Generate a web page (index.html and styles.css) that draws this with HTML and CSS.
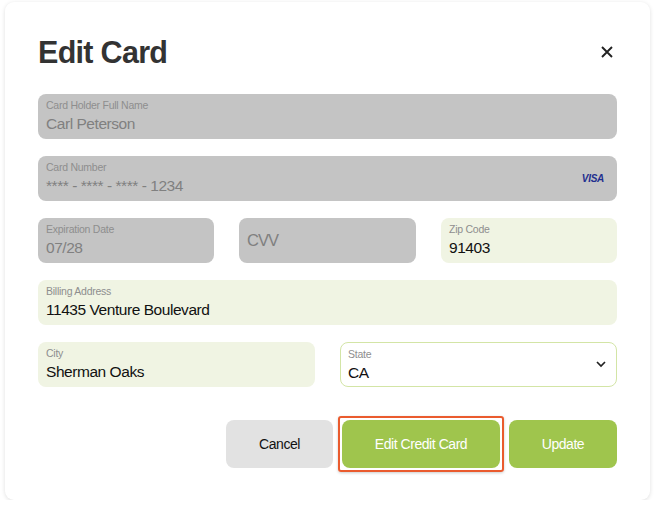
FILE: index.html
```html
<!DOCTYPE html>
<html>

<head>
  <title>Edit Card</title>
  <link rel="stylesheet" href="styles.css">
</head>

<body>
  <div class="card">
    <div class="card-header">
      <h1 class="title">Edit Card</h1>
      <svg class="close" viewBox="0 0 12 12" width="12" height="12">
        <path d="M1 1 L11 11 M11 1 L1 11" stroke="#222" stroke-width="1.9" fill="none" />
      </svg>
    </div>

    <div class="form">
      <div class="field disabled">
        <span class="label">Card Holder Full Name</span>
        <span class="value">Carl Peterson</span>
      </div>
      <div class="field disabled with-icon">
        <div class="field-text">
          <span class="label">Card Number</span>
          <span class="value">**** - **** - **** - 1234</span>
        </div>
        <span class="visa">VISA</span>
      </div>
      <div class="row row-3">
        <div class="field disabled">
          <span class="label">Expiration Date</span>
          <span class="value">07/28</span>
        </div>
        <div class="field disabled placeholder">
          <span class="value">CVV</span>
        </div>
        <div class="field filled">
          <span class="label">Zip Code</span>
          <span class="value">91403</span>
        </div>
      </div>
      <div class="field filled">
        <span class="label">Billing Address</span>
        <span class="value">11435 Venture Boulevard</span>
      </div>
      <div class="row row-2">
        <div class="field filled">
          <span class="label">City</span>
          <span class="value">Sherman Oaks</span>
        </div>
        <div class="field select with-icon">
          <div class="field-text">
            <span class="label">State</span>
            <span class="value">CA</span>
          </div>
          <svg class="chevron" viewBox="0 0 10 7" width="10" height="7">
            <path d="M1 1 L5 5 L9 1" stroke="#222" stroke-width="1.7" fill="none" />
          </svg>
        </div>
      </div>
    </div>

    <div class="actions">
      <button class="btn btn-cancel">Cancel</button>
      <div class="highlight">
        <button class="btn btn-green btn-edit">Edit Credit Card</button>
      </div>
      <button class="btn btn-green btn-update">Update</button>
    </div>
  </div>
</body>

</html>
```

FILE: styles.css
```css
body {
  margin: 0;
  padding: 2px 5px 0;
  background-color: #ffffff;
  font-family: "Liberation Sans", Arial, sans-serif;
}

.card {
  box-sizing: border-box;
  width: 645px;
  height: 498px;
  padding: 0 33px;
  background-color: #ffffff;
  border-radius: 9px;
  box-shadow: 0 1px 4px rgba(0, 0, 0, 0.13);
}

.card-header {
  box-sizing: border-box;
  display: flex;
  justify-content: space-between;
  align-items: center;
  height: 92px;
  padding-top: 8px;
}

.title {
  margin: 0;
  font-size: 30.5px;
  font-weight: bold;
  letter-spacing: -0.7px;
  color: #333333;
}

.close {
  margin-right: 4px;
}

.form {
  display: flex;
  flex-direction: column;
  gap: 17px;
}

.row {
  display: grid;
  gap: 25px;
}

.row-3 {
  grid-template-columns: 176px 177px 176px;
}

.row-2 {
  grid-template-columns: 277px 277px;
}

.field {
  box-sizing: border-box;
  display: flex;
  flex-direction: column;
  justify-content: center;
  height: 45px;
  padding: 0 8px 1px;
  border-radius: 8px;
}

.with-icon {
  flex-direction: row;
  justify-content: space-between;
  align-items: center;
}

.field-text {
  display: flex;
  flex-direction: column;
}

.label {
  margin-bottom: 2px;
  font-size: 10.5px;
  line-height: 14px;
  letter-spacing: -0.25px;
  color: #8e8e8e;
}

.value {
  font-size: 15.5px;
  line-height: 20px;
  letter-spacing: -0.45px;
  color: #111111;
}

.disabled {
  background-color: #c4c4c4;
}

.disabled .value {
  color: #808080;
}

.placeholder .value {
  font-size: 16.5px;
  letter-spacing: -0.9px;
}

.filled {
  background-color: #f0f4e3;
}

.select {
  background-color: #ffffff;
  border: 1px solid #d3e5a6;
  padding: 0 10px 0 7px;
}

.visa {
  margin-right: 5px;
  font-size: 10px;
  font-weight: bold;
  font-style: italic;
  letter-spacing: -0.3px;
  color: #1f2f8f;
}

.actions {
  display: flex;
  justify-content: flex-end;
  align-items: center;
  gap: 5px;
  height: 48px;
  margin-top: 33px;
}

.btn {
  height: 48px;
  padding: 0;
  border: 0;
  border-radius: 8px;
  font-family: inherit;
  font-size: 14px;
  letter-spacing: -0.45px;
}

.btn-cancel {
  width: 107px;
  background-color: #e2e2e2;
  color: #111111;
}

.btn-green {
  background-color: #9fc54d;
  color: #ffffff;
}

.btn-edit {
  display: block;
  width: 158px;
}

.btn-update {
  width: 108px;
}

.highlight {
  padding: 2px;
  border: 2px solid #ea5b2e;
  border-radius: 3px;
  box-shadow: 0 1px 3px rgba(0, 0, 0, 0.2);
}
```
